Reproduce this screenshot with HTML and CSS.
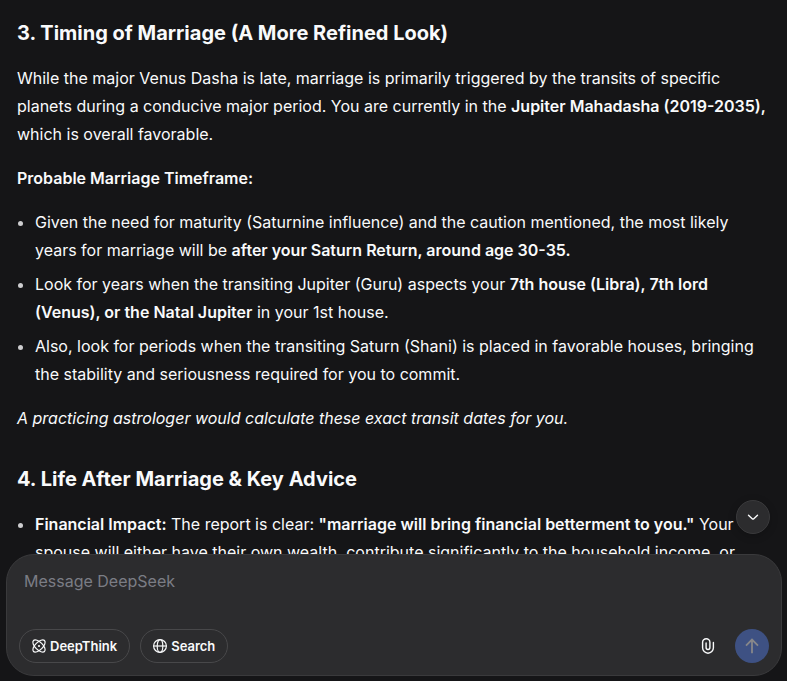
FILE: index.html
```html
<!DOCTYPE html>
<html lang="en">
<head>
    <meta charset="UTF-8">
    <meta name="viewport" content="width=device-width, initial-scale=1.0">
    <title>DeepSeek</title>
    <link rel="stylesheet" href="styles.css">
</head>
<body>

<main class="chat">
    <article class="message">
        <h3>3. Timing of Marriage (A More Refined Look)</h3>
        <p>While the major Venus Dasha is late, marriage is primarily triggered by the transits of specific planets during a conducive major period. You are currently in the <strong>Jupiter Mahadasha (2019-2035),</strong> which is overall favorable.</p>
        <p><strong>Probable Marriage Timeframe:</strong></p>
        <ul>
            <li>Given the need for maturity (Saturnine influence) and the caution mentioned, the most likely years for marriage will be <strong>after your Saturn Return, around age 30-35.</strong></li>
            <li>Look for years when the transiting Jupiter (Guru) aspects your <strong>7th house (Libra), 7th lord (Venus), or the Natal Jupiter</strong> in your 1st house.</li>
            <li>Also, look for periods when the transiting Saturn (Shani) is placed in favorable houses, bringing the stability and seriousness required for you to commit.</li>
        </ul>
        <p><em>A practicing astrologer would calculate these exact transit dates for you.</em></p>
        <h3>4. Life After Marriage &amp; Key Advice</h3>
        <ul>
            <li><strong>Financial Impact:</strong> The report is clear: <strong>"marriage will bring financial betterment to you."</strong> Your spouse will either have their own wealth, contribute significantly to the household income, or</li>
        </ul>
    </article>

    <form class="composer">
        <button type="button" class="scroll-down" aria-label="Scroll to bottom">
            <svg width="14" height="14" viewBox="0 0 14 14" fill="none" stroke="currentColor" stroke-width="1.4" stroke-linecap="round" stroke-linejoin="round">
                <path d="M2.5 5.2 L6.2 8.7 Q7 9.4 7.8 8.7 L11.5 5.2"/>
            </svg>
        </button>
        <textarea class="prompt" rows="2" placeholder="Message DeepSeek" aria-label="Message DeepSeek"></textarea>
        <div class="toolbar">
            <button type="button" class="pill">
                <svg width="14" height="14" viewBox="0 0 14 14" fill="none" stroke="currentColor" stroke-width="1.2">
                    <ellipse cx="7" cy="7" rx="7.8" ry="3.8" transform="rotate(45 7 7)"/>
                    <ellipse cx="7" cy="7" rx="7.8" ry="3.8" transform="rotate(-45 7 7)"/>
                    <circle cx="7" cy="7" r="1.1" fill="currentColor" stroke="none"/>
                </svg>
                DeepThink
            </button>
            <button type="button" class="pill">
                <svg width="14" height="14" viewBox="0 0 14 14" fill="none" stroke="currentColor" stroke-width="1.2">
                    <circle cx="7" cy="7" r="6.4"/>
                    <ellipse cx="7" cy="7" rx="2.8" ry="6.4"/>
                    <path d="M0.6 7 H13.4"/>
                </svg>
                Search
            </button>
            <button type="button" class="attach" aria-label="Attach file">
                <svg width="16" height="16" viewBox="0 0 16 16" fill="none" stroke="currentColor" stroke-width="1.4" stroke-linecap="round">
                    <path d="M6.1 5 V9.6 A1.9 1.9 0 0 0 9.9 9.6 V4.2 A3.65 3.4 0 0 0 2.6 4.2 V9.8 A5.4 5.4 0 0 0 13.4 9.8 V4.4"/>
                </svg>
            </button>
            <button type="submit" class="send" aria-label="Send">
                <svg width="16" height="16" viewBox="0 0 16 16" fill="none" stroke="currentColor" stroke-width="1.8">
                    <path d="M8 15.2 V1.8 M2 7.6 L8 1.6 L14 7.6"/>
                </svg>
            </button>
        </div>
    </form>
</main>

</body>
</html>
```
FILE: styles.css
```css
* {
    margin: 0;
    padding: 0;
    box-sizing: border-box;
    font-family: 'Inter', sans-serif;
}

body {
    background-color: #151517;
    color: #f9fafb;
}

.chat {
    display: flex;
    flex-direction: column;
    height: 100vh;
}

.message {
    flex: 1;
    min-height: 0;
    overflow: hidden;
    padding: 18px 18px 0 17px;
    font-size: 16px;
    line-height: 28px;
}

.message h3 {
    font-size: 20px;
    line-height: 30px;
    font-weight: 700;
    margin: 32px 0 16px;
}

.message h3:first-child {
    margin-top: 0;
}

.message p,
.message ul {
    margin-bottom: 16px;
}

.message strong {
    font-weight: 600;
}

.message ul {
    padding-left: 18px;
}

.message li + li {
    margin-top: 6px;
}

.message li::marker {
    color: #cdcdcf;
}

.composer {
    position: relative;
    margin: 0 5px 5px 6px;
    padding: 14px 12px 12px;
    background-color: #2c2c2e;
    border: 1px solid #3a3a3c;
    border-radius: 28px;
}

.prompt {
    display: block;
    width: 100%;
    padding: 0 5px;
    margin-bottom: 12px;
    border: none;
    outline: none;
    resize: none;
    background: none;
    color: #f9fafb;
    font-size: 16px;
    line-height: 24px;
}

.prompt::placeholder {
    color: #7b7d85;
}

.toolbar {
    display: flex;
    align-items: center;
    gap: 10px;
}

button {
    display: flex;
    align-items: center;
    justify-content: center;
    height: 34px;
    border: none;
    background: none;
    color: #f9fafb;
    cursor: pointer;
}

.pill {
    gap: 4px;
    padding: 0 12px;
    border: 1px solid #48484a;
    border-radius: 17px;
    font-size: 13px;
    font-weight: 600;
}

.pill svg {
    overflow: visible;
}

.attach {
    width: 34px;
    margin-left: auto;
}

.send {
    width: 34px;
    border-radius: 50%;
    background-color: #3e5183;
    color: #87878a;
}

.scroll-down {
    position: absolute;
    right: 11px;
    bottom: calc(100% + 21px);
    width: 34px;
    border: 1px solid #3a3a3c;
    border-radius: 50%;
    background-color: #2c2c2e;
    box-shadow: 0 2px 8px rgba(0, 0, 0, 0.2);
}
```
